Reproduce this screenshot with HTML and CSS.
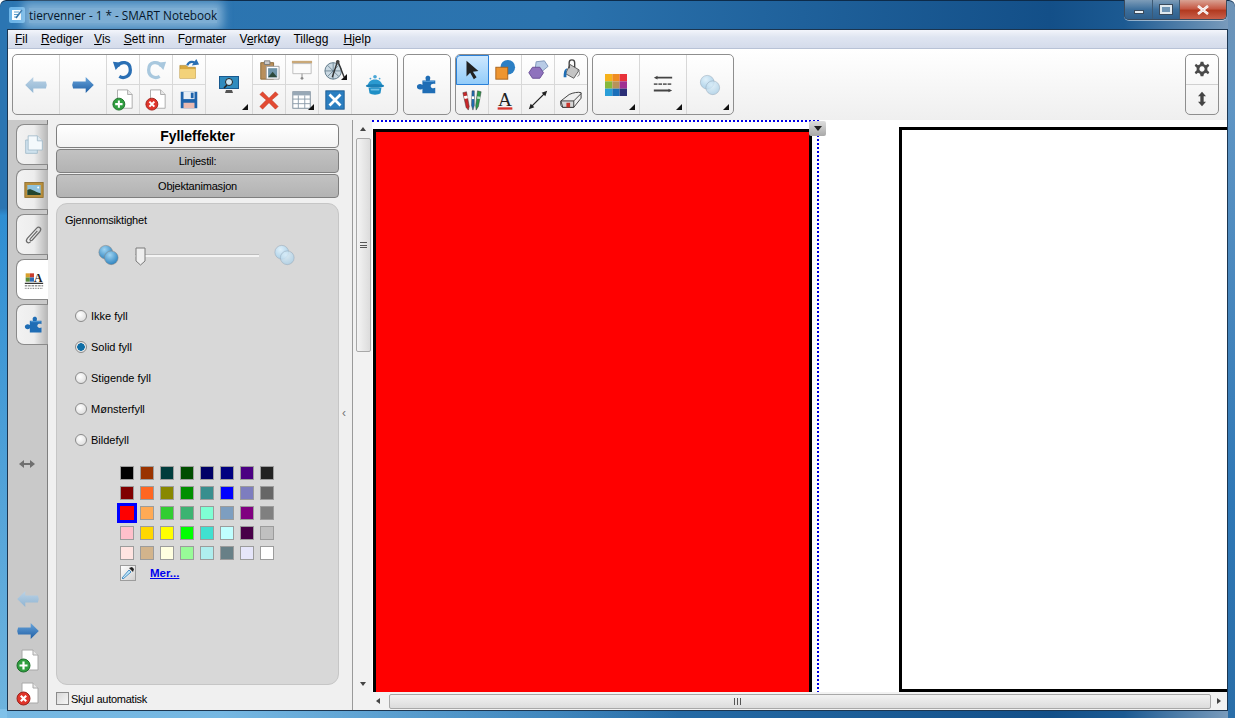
FILE: index.html
```html
<!DOCTYPE html>
<html lang="no">
<head>
<meta charset="utf-8">
<title>tiervenner - 1 * - SMART Notebook</title>
<link rel="stylesheet" href="styles.css">
</head>
<body>
<svg class="defs" aria-hidden="true">
  <defs>
    <linearGradient id="gBlue" x1="0" y1="0" x2="0" y2="1"><stop offset="0" stop-color="#6aa6dc"/><stop offset="1" stop-color="#1d5da3"/></linearGradient>
    <linearGradient id="gPale" x1="0" y1="0" x2="0" y2="1"><stop offset="0" stop-color="#bcd3e6"/><stop offset="1" stop-color="#8fb4d2"/></linearGradient>
    <radialGradient id="gBall" cx=".4" cy=".3" r=".8"><stop offset="0" stop-color="#9fd4f2"/><stop offset="1" stop-color="#2079b8"/></radialGradient>
    <radialGradient id="gBallPale" cx=".4" cy=".3" r=".8"><stop offset="0" stop-color="#dff0fa"/><stop offset="1" stop-color="#a4cbe4"/></radialGradient>
    <symbol id="arrow" viewBox="0 0 24 20"><path d="M0 10 L9 1 V6 H23 L24 10 L23 14 H9 V19 Z"/></symbol>
    <symbol id="pagePlus" viewBox="0 0 24 24">
      <path d="M6 1 H17 L22 6 V21 H6 Z" fill="#fff" stroke="#a8a8a8"/><path d="M17 1 V6 H22" fill="#e8e8e8" stroke="#a8a8a8"/>
      <circle cx="7.5" cy="16.5" r="6.5" fill="#2f9e3f" stroke="#1c6d2a"/><path d="M3.5 16.5 H11.5 M7.5 12.5 V20.5" stroke="#fff" stroke-width="2.2"/>
    </symbol>
    <symbol id="pageDel" viewBox="0 0 24 24">
      <path d="M6 1 H17 L22 6 V21 H6 Z" fill="#fff" stroke="#a8a8a8"/><path d="M17 1 V6 H22" fill="#e8e8e8" stroke="#a8a8a8"/>
      <circle cx="7.5" cy="16.5" r="6.5" fill="#e0352b" stroke="#9c2019"/><path d="M4.8 13.8 L10.2 19.2 M10.2 13.8 L4.8 19.2" stroke="#fff" stroke-width="2.2"/>
    </symbol>
    <symbol id="puzzle" viewBox="0 0 24 24"><path d="M7 7 H11 C10 5 10 2 13 2 C16 2 16 5 15 7 H21 V11 C19 10 16 10.500 16 13 C16 15.500 19 16 21 15 V21 H7 V16 C5 18 1 17 1 14 C1 11 5 10 7 12 Z" fill="#1f6db5"/><path d="M8 8 H20" stroke="#5da3dc" stroke-width="1"/></symbol>
    <symbol id="circles" viewBox="0 0 24 24"><circle cx="9" cy="9" r="7.500" fill="url(#gBallPale)" stroke="#9ab" stroke-width=".6"/><circle cx="15" cy="15" r="7.500" fill="url(#gBallPale)" fill-opacity=".8" stroke="#9ab" stroke-width=".6"/></symbol>
  </defs>
</svg>
<div class="window">
  <header class="titlebar">
    <svg class="app-icon" viewBox="0 0 16 16"><rect width="16" height="16" rx="2" fill="#6db5e8"/><path d="M3 3 H12 V13 H3 Z" fill="#fff"/><path d="M5 5 H10 M5 7.500 H10 M5 10 H8" stroke="#5a9ccc"/><path d="M7 11 L13 3" stroke="#2c6ea4" stroke-width="1.500"/></svg>
    <span class="title-text">tiervenner - 1 * - SMART Notebook</span>
    <div class="caption">
      <span class="cap cap-min"><i></i></span>
      <span class="cap cap-max"><i></i></span>
      <span class="cap cap-close"><svg viewBox="0 0 14 10" width="14" height="10"><path d="M2 1 L12 9 M12 1 L2 9" stroke="#fff" stroke-width="2.600"/><path d="M2 1 L12 9 M12 1 L2 9" stroke="#e8d8d8" stroke-width="1"/></svg></span>
    </div>
  </header>
  <div class="client">
    <nav class="menubar">
      <span class="menu"><u>F</u>il</span>
      <span class="menu menu-tight"><u>R</u>ediger</span>
      <span class="menu"><u>V</u>is</span>
      <span class="menu"><u>S</u>ett inn</span>
      <span class="menu">F<u>o</u>rmater</span>
      <span class="menu">V<u>e</u>rktøy</span>
      <span class="menu menu-wide">Tillegg</span>
      <span class="menu"><u>H</u>jelp</span>
    </nav>
    <div class="toolbar">
      <div class="group">
        <div class="big"><svg class="ic-arrow" fill="url(#gPale)"><use href="#arrow"/></svg></div>
        <div class="big"><svg class="ic-arrow flip" fill="url(#gBlue)"><use href="#arrow"/></svg></div>
        <div class="tools cols3">
          <div class="cell"><svg class="ic" viewBox="0 0 24 24"><path d="M6 8 C9 2 20 2 20 12 C20 19 13 22 8 19" fill="none" stroke="#2a6fb4" stroke-width="3.600"/><path d="M1 3 L11 4 L4 12 Z" fill="#2a6fb4"/></svg></div>
          <div class="cell"><svg class="ic" viewBox="0 0 24 24"><path d="M18 8 C15 2 4 2 4 12 C4 19 11 22 16 19" fill="none" stroke="#a9c8de" stroke-width="3.600"/><path d="M23 3 L13 4 L20 12 Z" fill="#a9c8de"/></svg></div>
          <div class="cell"><svg class="ic" viewBox="0 0 24 24"><path d="M2 7 H9 L11 9 H19 V21 H2 Z" fill="#d9a93f" stroke="#a57f28" stroke-width=".6"/><path d="M2 11 H19 V21 H2 Z" fill="#f3d27a"/><path d="M10 7 C12 2 18 2 19 6" fill="none" stroke="#2a6fb4" stroke-width="2.400"/><path d="M15 7 L23 6 L20 0 Z" fill="#2a6fb4"/></svg></div>
          <div class="cell"><svg class="ic" viewBox="0 0 24 24"><use href="#pagePlus"/></svg></div>
          <div class="cell"><svg class="ic" viewBox="0 0 24 24"><use href="#pageDel"/></svg></div>
          <div class="cell"><svg class="ic" viewBox="0 0 24 24"><path d="M3 3 H21 V21 H3 Z" fill="#1e63ab"/><path d="M6 3 H18 V11 H6 Z" fill="#e7eef5"/><path d="M14 4 H17 V10 H14 Z" fill="#1e63ab"/><path d="M6 15 H18 V21 H6 Z" fill="#e9b9b0"/></svg></div>
        </div>
        <div class="big tri"><svg class="ic ic-lg" viewBox="0 0 24 24"><path d="M2 3 H22 V16 H2 Z" fill="#18598f"/><path d="M3 4 H21 V15 H3 Z" fill="#2f8bbe"/><circle cx="12" cy="9" r="3.500" fill="#cde6f2" stroke="#222"/><path d="M10 12 L7 15" stroke="#222" stroke-width="1.600"/><path d="M9 17 H15 L16 20 H8 Z" fill="#555"/></svg></div>
        <div class="tools cols3">
          <div class="cell"><svg class="ic" viewBox="0 0 24 24"><path d="M3 4 H17 V22 H3 Z" fill="#b98f5c" stroke="#8a6836"/><path d="M7 2 H13 V6 H7 Z" fill="#cbcbcb" stroke="#777"/><path d="M9 8 H23 V22 H9 Z" fill="#fff" stroke="#999"/><path d="M11 10 H21 V20 H11 Z" fill="#6d93a8"/><path d="M11 20 L16 14 L21 20 Z" fill="#2c4a3c"/></svg></div>
          <div class="cell"><svg class="ic" viewBox="0 0 24 24"><path d="M1 2 H23 V5 H1 Z" fill="#c9a878"/><path d="M2 5 H22 V16 H2 Z" fill="#fbfbfb" stroke="#bbb"/><path d="M12 16 V20" stroke="#888"/><circle cx="12" cy="21" r="1.500" fill="#888"/></svg></div>
          <div class="cell tri"><svg class="ic" viewBox="0 0 24 24"><circle cx="10" cy="13" r="9" fill="#c9d8e2" stroke="#5a7484"/><path d="M10 4 V22 M1 13 H19 M4 7 L16 19 M16 7 L4 19" stroke="#5a7484" stroke-width=".8"/><path d="M15 2 L9 20 M15 2 L22 20" stroke="#333" stroke-width="1.500"/><circle cx="15" cy="3" r="2" fill="#444"/></svg></div>
          <div class="cell"><svg class="ic" viewBox="0 0 24 24"><path d="M5 3 L12 10 L19 3 L22 6 L15 12 L22 19 L19 22 L12 15 L5 22 L2 19 L9 12 L2 6 Z" fill="#e34a32" stroke="#b5301d" stroke-width=".5"/></svg></div>
          <div class="cell tri"><svg class="ic" viewBox="0 0 24 24"><rect x="2" y="3" width="19" height="18" fill="#fff" stroke="#7a8a98"/><rect x="2" y="3" width="19" height="4" fill="#98a8b6"/><path d="M2 11 H21 M2 16 H21 M8 7 V21 M15 7 V21" stroke="#8a9aa8"/></svg></div>
          <div class="cell"><svg class="ic" viewBox="0 0 24 24"><rect x="2" y="2" width="20" height="20" fill="#2b7ec0" stroke="#1c5c92"/><path d="M6 6 L18 18 M18 6 L6 18" stroke="#fff" stroke-width="3"/></svg></div>
        </div>
        <div class="big tail"><svg class="ic" viewBox="0 0 24 24"><path d="M12 6 C7 6 5 9 4 12 H20 C19 9 17 6 12 6 Z" fill="#2b9ad0"/><ellipse cx="12" cy="13" rx="10" ry="2" fill="#1a7fb6"/><path d="M5 15 H19 L18 21 C16 23 8 23 6 21 Z" fill="#1f8fc6"/><path d="M7 16 H17 L16.500 18 H7.500 Z" fill="#6fc0e6"/><circle cx="12" cy="3" r="2" fill="#4aa6d6"/><circle cx="7" cy="5" r="1" fill="#4aa6d6"/><circle cx="17" cy="5" r="1" fill="#4aa6d6"/></svg></div>
      </div>
      <div class="group group-puzzle">
        <div class="big last"><svg class="ic" viewBox="0 0 24 24"><use href="#puzzle"/></svg></div>
      </div>
      <div class="group">
        <div class="tools cols4">
          <div class="cell active"><svg class="ic" viewBox="0 0 24 24"><path d="M6 2 V19 L10 15 L14 22 L17 20 L13 14 L19 13 Z" fill="#222"/></svg></div>
          <div class="cell"><svg class="ic" viewBox="0 0 24 24"><circle cx="15" cy="9" r="8" fill="#2b7fc4"/><rect x="2" y="9" width="13" height="13" fill="#ee9530" stroke="#a8621a"/></svg></div>
          <div class="cell"><svg class="ic" viewBox="0 0 24 24"><path d="M10 3 L19 2 L23 8 L17 13 L9 10 Z" fill="#b8cbe6" stroke="#7d95b8"/><path d="M6 9 H14 L18 15 L14 21 H6 L2 15 Z" fill="#8f72bd" stroke="#664a94"/></svg></div>
          <div class="cell"><svg class="ic" viewBox="0 0 24 24"><path d="M11 6 L21 12 L15 21 L6 16 Z" fill="#c4c4c4" stroke="#555"/><path d="M10 10 V4 C10 0 16 0 16 4 V9" fill="none" stroke="#444" stroke-width="1.500"/><path d="M8 10 C4 11 4 16 4 20 H7 V13 Z" fill="#1f6db5"/><path d="M19 12 C22 13 22 18 19 19" fill="none" stroke="#777"/></svg></div>
          <div class="cell"><svg class="ic" viewBox="0 0 24 24"><path d="M2 4 L6 3 L9 19 L8 23 L5.500 20 Z" fill="#c8282a" stroke="#333" stroke-width=".5"/><path d="M3 8 L7 7 L7.500 10 L4 11 Z" fill="#fff"/><path d="M12 2 L14.500 2 L14.500 18 L13 23 L11.500 18 Z" fill="#1f6db5" stroke="#333" stroke-width=".5"/><path d="M11.800 8 H14.300 V11 H11.800 Z" fill="#fff"/><path d="M22 3 L18 2 L16 18 L16.500 23 L19 19 Z" fill="#2c9a4b" stroke="#333" stroke-width=".5"/><path d="M17.800 8 L21.200 8.500 L20.700 11 L17.500 10.700 Z" fill="#bfe5c8"/></svg></div>
          <div class="cell"><svg class="ic" viewBox="0 0 24 24"><text class="glyph-a" x="12" y="18" text-anchor="middle">A</text><rect x="4" y="20" width="16" height="2.500" fill="#d8322c"/></svg></div>
          <div class="cell"><svg class="ic" viewBox="0 0 24 24"><path d="M5 19 L19 5" stroke="#222" stroke-width="1.400"/><path d="M2 22 L8 20 L4 16 Z M22 2 L16 4 L20 8 Z" fill="#222"/></svg></div>
          <div class="cell"><svg class="ic" viewBox="0 0 24 24"><path d="M1 13 L10 6 C14 4 20 3 23 4 V10 L15 20 H3 C1 20 0 15 1 13 Z" fill="#efefef" stroke="#333"/><path d="M1 13 H15 V20 H3 Z" fill="#d6d6d6" stroke="#333"/><path d="M15 13 L23 5" stroke="#333"/><rect x="7" y="15" width="4" height="5" fill="#c9332a"/></svg></div>
        </div>
      </div>
      <div class="group">
        <div class="big tri"><svg class="ic" viewBox="0 0 21 21"><rect width="7" height="7" fill="#f6b21b"/><rect x="7" width="7" height="7" fill="#ef8c22"/><rect x="14" width="7" height="7" fill="#e8323a"/><rect y="7" width="7" height="7" fill="#86b83a"/><rect x="7" y="7" width="7" height="7" fill="#b8925a"/><rect x="14" y="7" width="7" height="7" fill="#a02f92"/><rect y="14" width="7" height="7" fill="#2a9ed8"/><rect x="7" y="14" width="7" height="7" fill="#1a6fba"/><rect x="14" y="14" width="7" height="7" fill="#2c2f78"/></svg></div>
        <div class="big tri"><svg class="ic" viewBox="0 0 24 24"><path d="M2 4 L6 2 V3 H22 V5 H6 V6 Z" fill="#444"/><path d="M2 11 H22" stroke="#666" stroke-width="2" stroke-dasharray="4 1"/><path d="M22 18 L18 16 V17 H2 V19 H18 V20 Z" fill="#444"/></svg></div>
        <div class="big tri last"><svg class="ic" viewBox="0 0 24 24"><use href="#circles"/></svg></div>
      </div>
      <div class="group group-right">
        <div class="sq"><svg class="ic ic-sm" viewBox="0 0 24 24"><path d="M10 1 H14 L15 5 L18 6.500 L21 4 L23 7 L20 10 V14 L23 17 L21 20 L18 17.500 L15 19 L14 23 H10 L9 19 L6 17.500 L3 20 L1 17 L4 14 V10 L1 7 L3 4 L6 6.500 L9 5 Z M12 8 A4 4 0 1 0 12.010 8 Z" fill="#4a4a4a" fill-rule="evenodd"/></svg></div>
        <div class="sq"><svg class="ic ic-sm" viewBox="0 0 24 24"><path d="M12 1 L18 8 H14.500 V16 H18 L12 23 L6 16 H9.500 V8 H6 Z" fill="#444"/></svg></div>
      </div>
    </div>
    <div class="main">
      <aside class="tabstrip">
        <div class="tabs">
          <div class="tab"><svg class="ic" viewBox="0 0 24 24"><path d="M2 6 H16 V22 H2 Z" fill="#cfe2ee" stroke="#9fb8c8"/><path d="M5 1 H16 L22 7 V18 H5 Z" fill="#f4f9fc" stroke="#9fb8c8"/><path d="M16 1 V7 H22" fill="#dfe9f0" stroke="#9fb8c8"/></svg></div>
          <div class="tab"><svg class="ic" viewBox="0 0 24 24"><rect x="1" y="3" width="22" height="18" fill="#b98f3c" stroke="#8a6a2a"/><rect x="4" y="6" width="16" height="12" fill="#8fc2dc"/><path d="M4 18 V12 C8 9 12 14 20 16 V18 Z" fill="#23452e"/><circle cx="17" cy="9" r="1.200" fill="#fff"/></svg></div>
          <div class="tab"><svg class="ic" viewBox="0 0 24 24"><path d="M8 20 C5 23 1 20 4 16 L15 4 C18 1 22 4 19 8 L10 18 C8 20 6 18 8 16 L16 7" fill="none" stroke="#6a6a6a" stroke-width="1.500"/></svg></div>
          <div class="tab tab-active"><svg class="ic" viewBox="0 0 24 24"><rect x="2" y="4" width="5" height="5" fill="#d8a02c"/><rect x="7" y="4" width="5" height="5" fill="#c83c2c"/><rect x="2" y="9" width="5" height="5" fill="#5c8c3c"/><rect x="7" y="9" width="5" height="5" fill="#2c6cb8"/><text class="glyph-a2" x="17" y="14" text-anchor="middle">A</text><path d="M1 16 H23" stroke="#222" stroke-width="1.400"/><path d="M1 19 H23" stroke="#444" stroke-dasharray="3 1"/><path d="M1 22 H23" stroke="#444" stroke-dasharray="1 1"/></svg></div>
          <div class="tab"><svg class="ic" viewBox="0 0 24 24"><use href="#puzzle"/></svg></div>
        </div>
        <div class="resize-glyph"><svg viewBox="0 0 16 10" width="16" height="10"><path d="M0 5 L5 1 V4 H11 V1 L16 5 L11 9 V6 H5 V9 Z" fill="#6f6f6f"/></svg></div>
        <div class="pager">
          <svg class="ic-arrow" fill="url(#gPale)"><use href="#arrow"/></svg>
          <svg class="ic-arrow flip" fill="url(#gBlue)"><use href="#arrow"/></svg>
          <svg class="ic" viewBox="0 0 24 24"><use href="#pagePlus"/></svg>
          <svg class="ic" viewBox="0 0 24 24"><use href="#pageDel"/></svg>
        </div>
      </aside>
      <section class="sidepanel">
        <div class="head head-on">Fylleffekter</div>
        <div class="head">Linjestil:</div>
        <div class="head">Objektanimasjon</div>
        <div class="props">
          <div class="lbl">Gjennomsiktighet</div>
          <div class="slider">
            <svg class="ball" viewBox="0 0 24 24"><circle cx="9" cy="9" r="7.500" fill="url(#gBall)" stroke="#888" stroke-width=".6"/><circle cx="15" cy="15" r="7.500" fill="url(#gBall)" stroke="#888" stroke-width=".6"/></svg>
            <div class="track"><svg class="thumb" viewBox="0 0 11 19"><path d="M1 1 H10 V14 L5.500 18 L1 14 Z" fill="#eee" stroke="#7a7a7a"/></svg></div>
            <svg class="ball" viewBox="0 0 24 24"><use href="#circles"/></svg>
          </div>
          <div class="radios">
            <div class="radio"><i class="dot"></i>Ikke fyll</div>
            <div class="radio"><i class="dot dot-on"></i>Solid fyll</div>
            <div class="radio"><i class="dot"></i>Stigende fyll</div>
            <div class="radio"><i class="dot"></i>Mønsterfyll</div>
            <div class="radio"><i class="dot"></i>Bildefyll</div>
          </div>
          <div class="palette">
            <i class="sw" style="background:#000000"></i><i class="sw" style="background:#993300"></i><i class="sw" style="background:#003c3c"></i><i class="sw" style="background:#004d00"></i><i class="sw" style="background:#000066"></i><i class="sw" style="background:#000080"></i><i class="sw" style="background:#4b0082"></i><i class="sw" style="background:#222222"></i>
            <i class="sw" style="background:#800000"></i><i class="sw" style="background:#ff6622"></i><i class="sw" style="background:#888800"></i><i class="sw" style="background:#008f00"></i><i class="sw" style="background:#388e8e"></i><i class="sw" style="background:#0000ff"></i><i class="sw" style="background:#7d7dbf"></i><i class="sw" style="background:#666666"></i>
            <i class="sw sw-on" style="background:#ff0000"></i><i class="sw" style="background:#ffaa55"></i><i class="sw" style="background:#32cd32"></i><i class="sw" style="background:#3cb371"></i><i class="sw" style="background:#7fffd4"></i><i class="sw" style="background:#7d9ec0"></i><i class="sw" style="background:#800080"></i><i class="sw" style="background:#808080"></i>
            <i class="sw" style="background:#ffc0cb"></i><i class="sw" style="background:#ffd700"></i><i class="sw" style="background:#ffff00"></i><i class="sw" style="background:#00ff00"></i><i class="sw" style="background:#40e0d0"></i><i class="sw" style="background:#c0ffff"></i><i class="sw" style="background:#480048"></i><i class="sw" style="background:#c0c0c0"></i>
            <i class="sw" style="background:#ffe4e1"></i><i class="sw" style="background:#d2b48c"></i><i class="sw" style="background:#ffffe0"></i><i class="sw" style="background:#98fb98"></i><i class="sw" style="background:#afeeee"></i><i class="sw" style="background:#688087"></i><i class="sw" style="background:#e6e6fa"></i><i class="sw" style="background:#ffffff"></i>
          </div>
          <div class="more">
            <span class="dropper"><svg viewBox="0 0 14 14" width="14" height="14"><path d="M2 13 L1 12 L8 4 L10 6 Z" fill="#bfe6fa" stroke="#2a7ab8" stroke-width=".8"/><path d="M8 2 L12 6 L13 3 L11 1 Z" fill="#222"/></svg></span>
            <a class="mer">Mer...</a>
          </div>
        </div>
        <label class="auto"><i class="check"></i>Skjul automatisk</label>
        <span class="handle">‹</span>
      </section>
      <div class="vscroll">
        <span class="tri-up"></span>
        <div class="vthumb"><span class="grip"></span></div>
        <span class="tri-down"></span>
      </div>
      <div class="stage">
        <div class="canvas">
          <div class="selection"></div>
          <div class="rect rect-red"></div>
          <div class="rect rect-white"></div>
          <span class="sel-menu"><i></i></span>
        </div>
        <div class="hscroll">
          <span class="tri-left"></span>
          <div class="hthumb"><span class="hgrip"></span></div>
          <span class="tri-right"></span>
        </div>
      </div>
    </div>
  </div>
</div>
</body>
</html>
```
FILE: styles.css
```css
* { box-sizing: border-box; }
html, body { margin: 0; padding: 0; background: #fff; overflow: hidden; }
body { font-family: "Liberation Sans", Arial, sans-serif; font-size: 12px; color: #000; }
.defs { position: absolute; width: 0; height: 0; }

.window {
  width: 1235px; height: 718px; padding: 0 7px 7px; display: flex; flex-direction: column;
  border-radius: 6px 6px 0 0;
  background:
    linear-gradient(90deg, rgba(130,195,235,.85) 0, rgba(130,195,235,.85) 18%, rgba(40,110,170,0) 55%) bottom / 100% 9px no-repeat,
    linear-gradient(180deg, #2b75b2 0, #2b75b2 29%, #2f8ed2 30%, #6fb4de 100%) left / 7px 100% no-repeat,
    linear-gradient(180deg, #6f93b6 0, #5f95c4 15%, #2f78b6 70%, #2a6ea8 100%) right / 7px 100% no-repeat,
    linear-gradient(90deg, #2c76b2 0, #2b73ae 45%, #134f88 85%, #1c5a92 91%, #7f9fbe 100%);
  box-shadow: inset 0 1px 0 #0d2b4a;
}
.titlebar { height: 29px; flex: none; display: flex; align-items: flex-start; }
.app-icon { width: 16px; height: 16px; margin: 7px 0 0 2px; flex: none; }
.title-text {
  margin: 8px 0 0 4px; height: 15px; line-height: 15px; font-family: "Open Sans", sans-serif; font-size: 11.750px; color: #05162a;
  background: rgba(180,212,235,.6); box-shadow: 0 0 10px 6px rgba(180,212,235,.6); white-space: nowrap;
}
.caption {
  margin: 0 1px 0 auto; display: flex; height: 20px; width: 103px; border: 1px solid #3a4a5c; border-top: 0;
  border-radius: 0 0 5px 5px; overflow: hidden; box-shadow: 0 1px 0 rgba(255,255,255,.5);
}
.cap { display: flex; align-items: center; justify-content: center; height: 100%; border-right: 1px solid #3e5a74; }
.cap-min { width: 28px; background: linear-gradient(180deg, #7d9cb8, #3d6f9c 50%, #2f5f8c); }
.cap-max { width: 27px; background: linear-gradient(180deg, #7d9cb8, #3d6f9c 50%, #2f5f8c); }
.cap-close { flex: 1; border: 0; background: linear-gradient(180deg, #d9a394, #c65a46 45%, #b23a20 55%, #c9604a); }
.cap-min i { width: 10px; height: 4px; margin-top: 5px; background: #e6edf3; border: 1px solid #3a4a5c; }
.cap-max i { width: 12px; height: 9px; border: 2px solid #e0e8ee; outline: 1px solid #3a4a5c; background: #6f94b4; }

.client {
  flex: 1; min-height: 0; display: flex; flex-direction: column; background: #fff;
  border: 1px solid #1b3550;
}
.menubar {
  height: 19px; flex: none; display: flex; align-items: center; padding: 0 0 1px 7px; gap: 13.200px;
  background: linear-gradient(180deg, #f3f5fb 0, #dfe5f1 40%, #d4dbeb 100%); border-bottom: 1px solid #b8c2d6;
}
.menu { color: #000; white-space: nowrap; line-height: 14px; }
.menu-tight { margin-right: -2px; }
.menu-wide { margin-right: 2px; }

.toolbar {
  height: 71px; flex: none; display: flex; align-items: flex-start; gap: 4px; padding: 5px 8px 0 4px;
  background: linear-gradient(180deg, #fff 0, #efefef 100%);
}
.group {
  height: 61px; display: flex; border: 1px solid #8e8e8e; border-radius: 5px;
  background: linear-gradient(180deg, #fff 0, #f0f0f0 100%);
}
.group-puzzle { margin-left: 1px; }
.group-right { margin-left: auto; flex-direction: column; width: 34px; }
.big { position: relative; width: 47px; height: 100%; display: flex; align-items: center; justify-content: center; border-right: 1px solid #d8d8d8; }
.big.last { width: 46px; border-right: 0; }
.big.tail { width: 45px; border-right: 0; }
.tools { display: grid; grid-template-rows: 30px 29px; grid-auto-flow: row; }
.cols3 { grid-template-columns: repeat(3, 33px); }
.cols4 { grid-template-columns: repeat(3, 33px) 32px; }
.cell { position: relative; display: flex; align-items: center; justify-content: center; border-right: 1px solid #d8d8d8; border-bottom: 1px solid #d8d8d8; }
.cell:nth-child(n+4) { border-bottom: 0; }
.cols4 .cell:nth-child(4) { border-bottom: 1px solid #d8d8d8; }
.cols4 .cell:nth-child(4n) { border-right: 0; }
.cell.active { background: linear-gradient(180deg, #cfe9ff, #93ccf9); outline: 1px solid #2a80d8; outline-offset: -1px; border-radius: 4px 0 0 0; }
.sq { height: 50%; display: flex; align-items: center; justify-content: center; }
.sq:first-child { border-bottom: 1px solid #d0d0d0; }
.ic { width: 22px; height: 22px; flex: none; display: block; }
.ic-lg { width: 24px; height: 24px; }
.ic-sm { width: 16px; height: 16px; }
.ic-arrow { width: 24px; height: 18px; flex: none; display: block; }
.flip { transform: scaleX(-1); }
.tri::after {
  content: ""; position: absolute; right: 4px; bottom: 4px; width: 6px; height: 6px;
  background: #111; clip-path: polygon(100% 0, 100% 100%, 0 100%);
}
.glyph-a { font-family: "Liberation Serif", serif; font-size: 21px; fill: #222; }
.glyph-a2 { font-family: "Liberation Serif", serif; font-size: 14px; font-weight: bold; fill: #222; }

.main { flex: 1; min-height: 0; display: flex; }
.tabstrip {
  width: 40px; flex: none; display: flex; flex-direction: column; align-items: flex-end; padding-top: 4px;
  background: #c9c9c9; border-right: 1px solid #7f7f7f;
}
.tabs { display: flex; flex-direction: column; gap: 4px; width: 32px; margin-right: -1px; position: relative; }
.tab {
  height: 41px; display: flex; align-items: center; justify-content: center; padding-left: 3px;
  background: linear-gradient(90deg, #f2f2f2 0, #ededed 55%, #b5b5b5 100%);
  border: 1px solid #8a8a8a; border-right: 0; border-radius: 8px 0 0 8px;
}
.tab .ic { width: 20px; height: 20px; }
.tab-active { background: #fff; }
.resize-glyph { width: 100%; margin-top: 114px; display: flex; justify-content: center; padding-right: 1px; height: 10px; }
.pager { width: 100%; margin-top: auto; padding: 0 0 4px 8px; display: flex; flex-direction: column; gap: 9px; align-items: flex-start; }
.pager .ic { width: 24px; height: 24px; }
.pager .ic-arrow { width: 24px; height: 18px; }
.pager .ic-arrow:first-child { margin-bottom: 5px; }

.sidepanel {
  width: 305px; flex: none; position: relative; padding: 4px 13px 0 8px; background: #f0f0f0;
  border-right: 1px solid #9a9a9a; display: flex; flex-direction: column; gap: 1px;
}
.head {
  height: 24px; flex: none; display: flex; align-items: center; justify-content: center; font-size: 11px; letter-spacing: -.2px; padding-bottom: 1px;
  background: linear-gradient(180deg, #c2c2c2, #b3b3b3); border: 1px solid #7f7f7f; border-radius: 4px;
}
.head-on { background: linear-gradient(180deg, #fff, #f3f3f3); font-size: 14px; font-weight: bold; letter-spacing: 0; }
.props {
  height: 482px; flex: none; margin-top: 4px; padding: 9px 0 0 8px; background: #d8d8d8;
  border: 1px solid #c6c6c6; border-radius: 11px;
}
.lbl { height: 14px; line-height: 14px; font-size: 11px; letter-spacing: -.2px; }
.slider { display: flex; align-items: center; margin: 17px 0 0 32px; height: 22px; }
.ball { width: 23px; height: 22px; flex: none; }
.track { position: relative; width: 124px; height: 3px; margin: 0 14px 0 15px; background: #f4f4f4; border-top: 1px solid #bdbdbd; }
.thumb { position: absolute; left: 0; top: -8px; width: 11px; height: 19px; }
.radios { margin: 43px 0 0 10px; display: flex; flex-direction: column; gap: 17px; }
.radio { height: 14px; display: flex; align-items: center; gap: 4px; font-size: 11px; }
.dot { width: 12px; height: 12px; border-radius: 50%; flex: none; border: 1px solid #8b8b8b; background: radial-gradient(circle at 40% 35%, #fff, #d6d6d6); }
.dot-on { background: radial-gradient(circle, #0f6ea6 0 3.500px, #e8e8e8 4px); }
.palette { margin: 19px 0 0 55px; display: grid; grid-template-columns: repeat(8, 14px); gap: 6px; }
.sw { position: relative; width: 14px; height: 14px; border: 1px solid #9c9c9c; }
.sw-on { outline: 3px solid #0000ff; outline-offset: 0; border: 0; }
.more { display: flex; align-items: center; margin: 5px 0 0 55px; height: 16px; gap: 14px; }
.dropper { width: 16px; height: 16px; display: flex; align-items: center; justify-content: center; border: 1px solid #9c9c9c; background: linear-gradient(135deg, #fff, #d0d0d0); }
.mer { color: #0000ee; font-weight: bold; text-decoration: underline; font-size: 11.500px; }
.auto { display: flex; align-items: center; gap: 2px; height: 13px; margin-top: 6px; font-size: 11px; letter-spacing: -.25px; white-space: nowrap; }
.check { width: 13px; height: 13px; border: 1px solid #8b8b8b; background: linear-gradient(135deg, #d8d8d8, #f6f6f6); flex: none; }
.handle { position: absolute; right: 6px; top: 286px; color: #777; font-size: 12px; line-height: 14px; }

.vscroll { width: 19px; flex: none; position: relative; background: #f2f2f2; padding: 0 2px 0 3px; display: flex; flex-direction: column; align-items: center; }
.vthumb { width: 15px; height: 214px; margin-top: 7px; flex: none; display: flex; align-items: center; justify-content: center; background: linear-gradient(90deg, #f4f4f4, #dcdcdc); border: 1px solid #a8a8a8; border-radius: 2px; }
.grip { width: 7px; height: 6px; border-top: 1px solid #555; border-bottom: 1px solid #555; background: linear-gradient(#555, #555) center / 100% 1px no-repeat; }
.tri-up, .tri-down, .tri-left, .tri-right { width: 0; height: 0; flex: none; border: 3px solid transparent; }
.tri-up { border-top: 0; border-bottom: 4px solid #444; margin-top: 7px; }
.tri-down { border-bottom: 0; border-top: 4px solid #444; margin-top: auto; margin-bottom: 24px; }

.stage { flex: 1; min-width: 0; display: flex; flex-direction: column; }
.canvas { flex: 1; position: relative; overflow: hidden; background: #fff; }
.selection { position: absolute; left: 0; top: 0; width: 447px; height: 600px; border-top: 2px dotted #0000e6; border-right: 2px dotted #0000e6; }
.rect { position: absolute; border: 3px solid #000; }
.rect-red { left: 1px; top: 9px; width: 439px; height: 570px; background: #f00; }
.rect-white { left: 527px; top: 7px; width: 340px; height: 565px; background: #fff; border-right: 0; }
.sel-menu {
  position: absolute; left: 437px; top: 1px; width: 17px; height: 15px; display: flex; align-items: center; justify-content: center;
  background: linear-gradient(180deg, #dedede, #a8a8a8); border-radius: 2px;
}
.sel-menu i { width: 0; height: 0; border: 4px solid transparent; border-bottom: 0; border-top: 5px solid #222; }
.hscroll { height: 18px; flex: none; display: flex; align-items: center; padding: 0 6px 0 4px; background: #f2f2f2; }
.hthumb { flex: 1; height: 15px; margin: 0 6px 0 9px; padding-left: 344px; display: flex; align-items: center; background: linear-gradient(180deg, #f2f2f2, #dcdcdc); border: 1px solid #a8a8a8; border-radius: 2px; }
.hgrip { width: 7px; height: 7px; border-left: 1px solid #555; border-right: 1px solid #555; background: linear-gradient(#555, #555) center / 1px 100% no-repeat; }
.tri-left { border-left: 0; border-right: 4px solid #444; }
.tri-right { border-right: 0; border-left: 4px solid #444; }
```
